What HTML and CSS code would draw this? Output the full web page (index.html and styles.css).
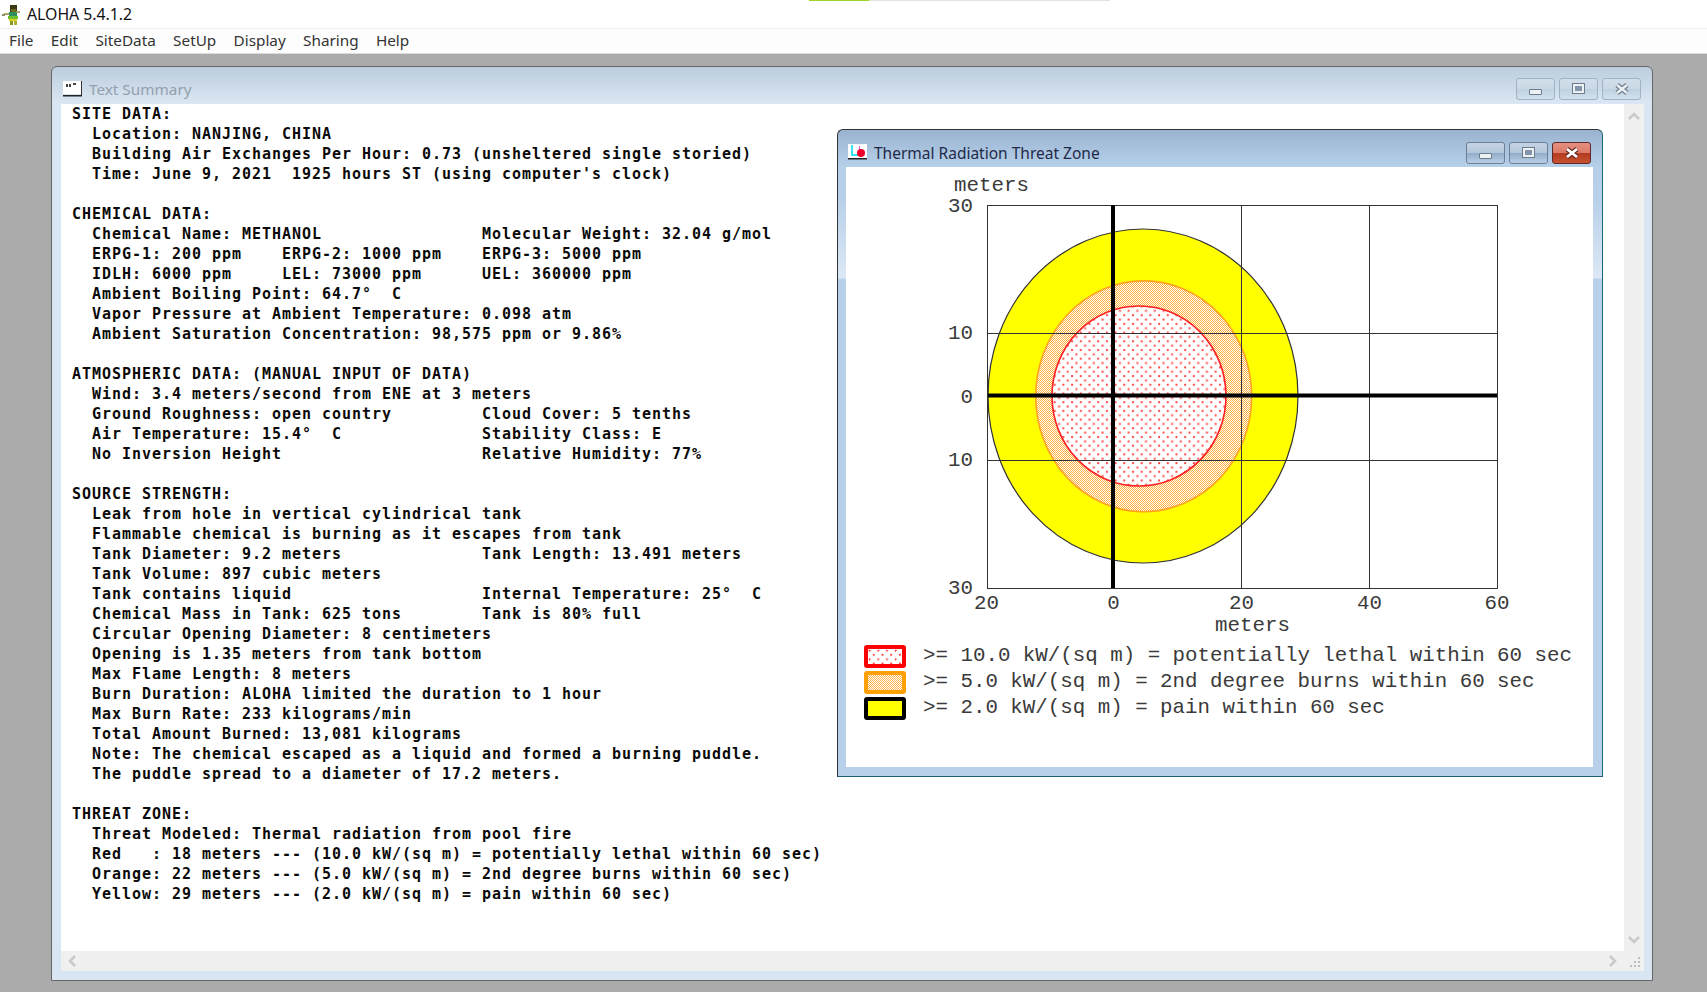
FILE: index.html
```html
<!DOCTYPE html>
<html lang="en">
<head>
<meta charset="utf-8">
<title>ALOHA 5.4.1.2</title>
<link rel="stylesheet" href="styles.css">
</head>
<body>
<div class="progress"><span class="progress-done"></span></div>
<header class="appbar">
  <svg class="app-icon" width="22" height="24" viewBox="0 0 22 24">
    <rect x="9" y="4" width="7" height="7" fill="#3b3a14"/>
    <rect x="10" y="8" width="5" height="3" fill="#6f6a20"/>
    <rect x="3" y="12" width="5" height="2" fill="#b9a56a"/>
    <rect x="1" y="13" width="3" height="2" fill="#8f8f60"/>
    <rect x="15" y="10" width="4" height="2" fill="#b9a56a"/>
    <rect x="8" y="11" width="8" height="4" fill="#2f8f5f"/>
    <rect x="7" y="15" width="10" height="3" fill="#6fbf2f"/>
    <rect x="8" y="18" width="8" height="2" fill="#d7d020"/>
    <rect x="9" y="20" width="3" height="4" fill="#8a9a20"/>
    <rect x="13" y="20" width="3" height="4" fill="#b0b030"/>
  </svg>
  <span class="app-name">ALOHA 5.4.1.2</span>
</header>
<nav class="menubar">
  <span>File</span><span>Edit</span><span>SiteData</span><span>SetUp</span><span>Display</span><span>Sharing</span><span>Help</span>
</nav>
<main class="desktop">
  <section class="win win-main">
    <div class="win-title">
      <svg class="win-icon" width="20" height="16" viewBox="0 0 20 16">
        <rect x="0" y="0" width="19" height="13" fill="#fff"/>
        <rect x="3" y="3" width="2" height="3" fill="#444"/><rect x="6" y="3" width="2" height="3" fill="#444"/><rect x="10" y="2" width="3" height="2" fill="#444"/>
        <rect x="0" y="14" width="19" height="1.5" fill="#222"/>
        <rect x="18" y="0" width="1" height="14" fill="#333"/>
      </svg>
      <span class="win-name">Text Summary</span>
      <div class="win-buttons">
        <span class="btn"><i class="glyph-min"></i></span>
        <span class="btn"><i class="glyph-max"></i></span>
        <span class="btn">
          <svg width="16" height="12" viewBox="0 0 16 12"><path d="M3 2 L13 10 M13 2 L3 10" stroke="#6f7d8c" stroke-width="5"/><path d="M3 2 L13 10 M13 2 L3 10" stroke="#e9eef3" stroke-width="2.6"/></svg>
        </span>
      </div>
    </div>
    <div class="client">
      <div class="text-pane">
<pre class="report">SITE DATA:
  Location: NANJING, CHINA
  Building Air Exchanges Per Hour: 0.73 (unsheltered single storied)
  Time: June 9, 2021  1925 hours ST (using computer's clock)

CHEMICAL DATA:
  Chemical Name: METHANOL                Molecular Weight: 32.04 g/mol
  ERPG-1: 200 ppm    ERPG-2: 1000 ppm    ERPG-3: 5000 ppm
  IDLH: 6000 ppm     LEL: 73000 ppm      UEL: 360000 ppm
  Ambient Boiling Point: 64.7°  C
  Vapor Pressure at Ambient Temperature: 0.098 atm
  Ambient Saturation Concentration: 98,575 ppm or 9.86%

ATMOSPHERIC DATA: (MANUAL INPUT OF DATA)
  Wind: 3.4 meters/second from ENE at 3 meters
  Ground Roughness: open country         Cloud Cover: 5 tenths
  Air Temperature: 15.4°  C              Stability Class: E
  No Inversion Height                    Relative Humidity: 77%

SOURCE STRENGTH:
  Leak from hole in vertical cylindrical tank
  Flammable chemical is burning as it escapes from tank
  Tank Diameter: 9.2 meters              Tank Length: 13.491 meters
  Tank Volume: 897 cubic meters
  Tank contains liquid                   Internal Temperature: 25°  C
  Chemical Mass in Tank: 625 tons        Tank is 80% full
  Circular Opening Diameter: 8 centimeters
  Opening is 1.35 meters from tank bottom
  Max Flame Length: 8 meters
  Burn Duration: ALOHA limited the duration to 1 hour
  Max Burn Rate: 233 kilograms/min
  Total Amount Burned: 13,081 kilograms
  Note: The chemical escaped as a liquid and formed a burning puddle.
  The puddle spread to a diameter of 17.2 meters.

THREAT ZONE:
  Threat Modeled: Thermal radiation from pool fire
  Red   : 18 meters --- (10.0 kW/(sq m) = potentially lethal within 60 sec)
  Orange: 22 meters --- (5.0 kW/(sq m) = 2nd degree burns within 60 sec)
  Yellow: 29 meters --- (2.0 kW/(sq m) = pain within 60 sec)</pre>
        <section class="win win-child">
          <div class="win-title">
            <svg class="win-icon" width="20" height="16" viewBox="0 0 20 16">
              <rect x="0" y="0" width="19" height="14" fill="#fff"/>
              <rect x="3" y="1" width="2" height="11" fill="#33e6f2"/>
              <rect x="3" y="10" width="13" height="2" fill="#33e6f2"/>
              <rect x="11" y="2" width="1" height="5" fill="#e060e0"/>
              <circle cx="13" cy="9" r="4" fill="#f0002a"/>
              <rect x="0" y="14" width="19" height="1.5" fill="#222"/>
            </svg>
            <span class="win-name">Thermal Radiation Threat Zone</span>
            <div class="win-buttons">
              <span class="btn btn-active"><i class="glyph-min"></i></span>
              <span class="btn btn-active"><i class="glyph-max"></i></span>
              <span class="btn btn-close">
                <svg width="16" height="12" viewBox="0 0 16 12"><path d="M3 2 L13 10 M13 2 L3 10" stroke="#6b2a22" stroke-width="5"/><path d="M3 2 L13 10 M13 2 L3 10" stroke="#fff" stroke-width="2.8"/></svg>
              </span>
            </div>
          </div>
          <div class="chart-client">
            <svg class="chart" width="747" height="473" viewBox="846 167 747 473">
              <defs>
                <pattern id="dots-red" width="8.7" height="8.7" patternUnits="userSpaceOnUse">
                  <rect x="1" y="1" width="2" height="2" fill="#ff4a4a"/>
                  <rect x="5.35" y="5.35" width="2" height="2" fill="#ff4a4a"/>
                </pattern>
                <pattern id="dots-orange" width="2" height="2" patternUnits="userSpaceOnUse">
                  <rect x="0" y="0" width="1" height="1" fill="#ffb040" shape-rendering="crispEdges"/>
                  <rect x="1" y="1" width="1" height="1" fill="#ffb040" shape-rendering="crispEdges"/>
                </pattern>
              </defs>
              <ellipse cx="1143" cy="396" rx="155" ry="167" class="zone-yellow"/>
              <ellipse cx="1143.7" cy="396.3" rx="108" ry="115.4" class="zone-white"/>
              <ellipse cx="1143.7" cy="396.3" rx="108" ry="115.4" class="zone-orange"/>
              <ellipse cx="1139" cy="396" rx="87" ry="90" class="zone-white"/>
              <ellipse cx="1139" cy="396" rx="87" ry="90" class="zone-red"/>
              <g class="grid">
                <rect x="987.5" y="205.5" width="510" height="383"/>
                <path d="M1241.5 205V588 M1369.5 205V588 M987 333.5H1497 M987 460.5H1497"/>
              </g>
              <path class="axes" d="M1113 205V588 M988 395.5H1497"/>
              <text class="lbl" x="954" y="191">meters</text>
              <text class="lbl end" x="973" y="212">30</text>
              <text class="lbl end" x="973" y="339">10</text>
              <text class="lbl end" x="973" y="403">0</text>
              <text class="lbl end" x="973" y="466">10</text>
              <text class="lbl end" x="973" y="594">30</text>
              <text class="lbl mid" x="986.5" y="609">20</text>
              <text class="lbl mid" x="1113.5" y="609">0</text>
              <text class="lbl mid" x="1241.5" y="609">20</text>
              <text class="lbl mid" x="1369.5" y="609">40</text>
              <text class="lbl mid" x="1497" y="609">60</text>
              <text class="lbl mid" x="1252.5" y="631">meters</text>
            </svg>
            <ul class="legend">
              <li><span class="swatch swatch-red"></span>&gt;= 10.0 kW/(sq m) = potentially lethal within 60 sec</li>
              <li><span class="swatch swatch-orange"></span>&gt;= 5.0 kW/(sq m) = 2nd degree burns within 60 sec</li>
              <li><span class="swatch swatch-yellow"></span>&gt;= 2.0 kW/(sq m) = pain within 60 sec</li>
            </ul>
          </div>
        </section>
      </div>
      <div class="vscroll">
        <svg width="14" height="10" viewBox="0 0 14 10"><path class="chev" d="M2 8 L7 3 L12 8"/></svg>
        <svg width="14" height="10" viewBox="0 0 14 10"><path class="chev" d="M2 2 L7 7 L12 2"/></svg>
      </div>
      <div class="hscroll">
        <svg width="10" height="14" viewBox="0 0 10 14"><path class="chev" d="M8 2 L3 7 L8 12"/></svg>
        <svg width="10" height="14" viewBox="0 0 10 14"><path class="chev" d="M2 2 L7 7 L2 12"/></svg>
      </div>
      <div class="grip">
        <svg width="12" height="12" viewBox="0 0 12 12"><path fill="#bdbdbd" d="M9 1h2v2H9z M5 5h2v2H5z M9 5h2v2H9z M1 9h2v2H1z M5 9h2v2H5z M9 9h2v2H9z"/></svg>
      </div>
    </div>
  </section>
</main>
</body>
</html>
```
FILE: styles.css
```css
* { box-sizing: border-box; }
html, body { margin: 0; height: 100%; }
body {
  display: flex;
  flex-direction: column;
  height: 100vh;
  overflow: hidden;
  position: relative;
  font-family: "Noto Sans", "Open Sans", sans-serif;
  background: #fff;
}
.progress {
  position: absolute;
  left: 809px;
  top: 0;
  width: 301px;
  height: 1px;
  background: #e3e3e3;
}
.progress-done { display: block; width: 60px; height: 1px; background: #9dd227; }

.appbar {
  height: 29px;
  flex: none;
  display: flex;
  align-items: center;
  padding-left: 1px;
  gap: 4px;
  border-bottom: 1px solid #f1f1f1;
  background: #fff;
}
.app-icon { display: block; margin-top: -2px; }
.app-name { font-size: 15.8px; color: #111; margin-top: -1px; }

.menubar {
  height: 24px;
  flex: none;
  display: flex;
  align-items: center;
  gap: 17.3px;
  padding: 0 0 2px 9px;
  background: #fdfdfd;
  font-size: 15.3px;
  color: #333;
}

.desktop { flex: 1; position: relative; background: #ababab; box-shadow: inset 0 1px 0 #dcdcdc; }

.win { position: absolute; display: flex; flex-direction: column; border: 1px solid #666; border-radius: 6px 6px 0 0; }
.win-main {
  left: 51px;
  top: 13px;
  width: 1602px;
  height: 915px;
  padding: 0 8px 9px 9px;
  background: linear-gradient(180deg, #bccddd 0, #dbe7f3 37px, #d8e5f3 38px, #d8e5f3 100%);
}
.win-child {
  left: 776px;
  top: 25px;
  width: 766px;
  height: 648px;
  padding: 0 9px 9px 8px;
  border-color: #333;
  border-right-color: #1f6a7a;
  border-bottom-color: #1f5f6f;
  background: linear-gradient(180deg, #9ab3cf 0, #b7d0ea 37px, #b8d0e9 70px, #dce8f5 148px, #b8d0e9 149px, #b8d0e9 100%);
}
.win-title { height: 37px; flex: none; display: flex; align-items: flex-start; position: relative; }
.win-icon { display: block; flex: none; margin: 14px 0 0 2px; }
.win-name { font-size: 15.3px; line-height: 20px; margin: 12px 0 0 6px; color: #94a0ad; }
.win-child .win-name { color: #1f2a48; margin: 13px 0 0 6px; font-size: 15.5px; }
.win-child .win-icon { margin-top: 14px; }
.win-buttons { margin-left: auto; display: flex; gap: 4px; padding-top: 11px; margin-right: 3px; }
.win-child .win-buttons { padding-top: 12px; margin-right: 2px; }
.btn {
  width: 39px;
  height: 22px;
  display: flex;
  align-items: center;
  justify-content: center;
  border: 1px solid #9fb2c6;
  border-radius: 3px;
  background: linear-gradient(180deg, #d2deea 0, #c9d8e6 50%, #bfd0e0 52%, #d3e1ee 100%);
}
.btn-active { border-color: #6c7f94; background: linear-gradient(180deg, #c6d5e5 0, #b3c6da 50%, #93adc9 52%, #b8cfe6 100%); }
.btn-close { border-color: #5c2a2c; background: linear-gradient(180deg, #e58f80 0, #dc7a68 50%, #b23c20 52%, #c9502f 100%); }
.glyph-min { display: block; width: 13px; height: 6px; margin-top: 5px; border: 1px solid #6d7c8d; border-radius: 1px; background: #eef1f4; }
.glyph-max { display: block; width: 11px; height: 9px; border: 2px solid #eef1f4; box-shadow: 0 0 0 1px #6d7c8d; background: #8595a9; margin-top: -2px; }

.client { flex: 1; min-height: 0; display: grid; grid-template-columns: 1fr 20px; grid-template-rows: 1fr 20px; }
.text-pane { position: relative; background: #fff; min-width: 0; }
.report {
  margin: 0;
  padding-left: 11px;
  font-family: "DejaVu Sans Mono", "Liberation Mono", monospace;
  font-weight: 700;
  font-size: 15px;
  letter-spacing: 0.97px;
  line-height: 20px;
  color: #0a0a0a;
}
.vscroll { background: #f0f0f0; display: flex; flex-direction: column; justify-content: space-between; align-items: center; padding: 7px 0 6px; }
.hscroll { background: #f0f0f0; display: flex; justify-content: space-between; align-items: center; padding: 0 6px 0 6px; }
.vscroll svg, .hscroll svg, .grip svg { display: block; }
.chev { fill: none; stroke: #c9c9c9; stroke-width: 2.5; }
.grip { background: #f0f0f0; display: flex; align-items: flex-end; justify-content: flex-end; padding: 0 3px 3px 0; }

.chart-client { flex: 1; background: #fff; display: flex; flex-direction: column; min-height: 0; }
.chart { display: block; flex: none; }
.zone-yellow { fill: #ffff00; stroke: #333; stroke-width: 1.2; }
.zone-white { fill: #fff; }
.zone-orange { fill: url(#dots-orange); stroke: #ffa31f; stroke-width: 1.6; }
.zone-red { fill: url(#dots-red); stroke: #ff2020; stroke-width: 1.6; }
.grid { fill: none; stroke: #333; stroke-width: 1; }
.axes { fill: none; stroke: #000; stroke-width: 4; }
.lbl { font-family: "Liberation Mono", monospace; font-size: 20.8px; fill: #3a3a3a; }
.end { text-anchor: end; }
.mid { text-anchor: middle; }

.legend {
  list-style: none;
  margin: 0;
  padding: 5px 0 0 18px;
  font-family: "Liberation Mono", monospace;
  font-size: 20.8px;
  color: #3a3a3a;
}
.legend li { height: 26px; line-height: 22px; display: flex; gap: 17px; white-space: pre; }
.swatch { width: 42px; height: 23px; flex: none; border: 4px solid; border-radius: 3px; }
.swatch-red {
  border-color: #ff0000;
  background-image: radial-gradient(circle at 1.5px 1.5px, #ff4a4a 0.9px, transparent 1.1px), radial-gradient(circle at 5.85px 5.85px, #ff4a4a 0.9px, transparent 1.1px);
  background-size: 8.7px 8.7px;
}
.swatch-orange {
  border-color: #ffa000;
  background: repeating-conic-gradient(#ffb450 0 25%, #fff 0 50%) 0 0 / 2px 2px;
}
.swatch-yellow { border-color: #000; background: #ffff00; }
```
